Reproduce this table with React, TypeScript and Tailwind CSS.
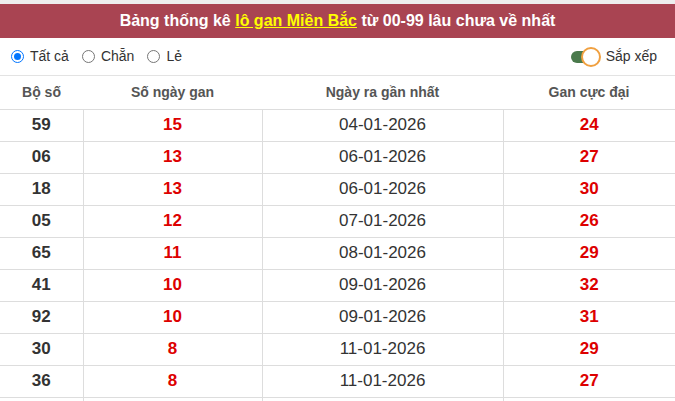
import React from "react";

const rows = [
  ["59", "15", "04-01-2026", "24"],
  ["06", "13", "06-01-2026", "27"],
  ["18", "13", "06-01-2026", "30"],
  ["05", "12", "07-01-2026", "26"],
  ["65", "11", "08-01-2026", "29"],
  ["41", "10", "09-01-2026", "32"],
  ["92", "10", "09-01-2026", "31"],
  ["30", "8", "11-01-2026", "29"],
  ["36", "8", "11-01-2026", "27"],
  ["", "", "", ""],
];

function Radio({ checked, label }: { checked?: boolean; label: string }) {
  return (
    <label className="flex items-center gap-[6px]">
      <span
        className={
          "flex h-[13px] w-[13px] items-center justify-center rounded-full border " +
          (checked ? "border-[#0075ff]" : "border-[#767676]")
        }
      >
        {checked && <span className="h-[7px] w-[7px] rounded-full bg-[#0075ff]" />}
      </span>
      <span>{label}</span>
    </label>
  );
}

export default function App() {
  return (
    <div className="w-[675px] h-[401px] overflow-hidden pt-[4px] font-['Liberation_Sans',Arial,sans-serif] bg-[#eeeeee]">
      <div className="bg-white">
        <div className="flex h-[34px] items-center justify-center bg-[#a94452] text-[16px] font-bold text-white">
          <span>
            Bảng thống kê{" "}
            <a className="text-[#ffff00] underline">lô gan Miền Bắc</a> từ 00-99 lâu chưa về nhất
          </span>
        </div>
        <div className="flex h-[38px] items-center justify-between border-b border-[#e3e3e3] pl-[11px] pr-[18px] text-[14px] text-[#333]">
          <div className="flex items-center gap-[13px]">
            <Radio checked label="Tất cả" />
            <Radio label="Chẵn" />
            <Radio label="Lẻ" />
          </div>
          <div className="flex items-center gap-[5px]">
            <div className="relative h-[20px] w-[30px]">
              <div className="absolute left-0 top-[4px] h-[12px] w-[24px] rounded-full bg-[#4a7a4c]" />
              <div className="absolute right-0 top-0 h-[20px] w-[20px] rounded-full border-2 border-[#f0a040] bg-white" />
            </div>
            <span>Sắp xếp</span>
          </div>
        </div>
        <table className="w-full border-collapse">
          <colgroup>
            <col className="w-[83px]" />
            <col className="w-[179px]" />
            <col className="w-[241px]" />
            <col />
          </colgroup>
          <thead>
            <tr className="h-[33px] border-b border-[#dddddd] text-[14px] font-bold text-[#555]">
              <th className="font-bold">Bộ số</th>
              <th className="font-bold">Số ngày gan</th>
              <th className="font-bold">Ngày ra gần nhất</th>
              <th className="font-bold">Gan cực đại</th>
            </tr>
          </thead>
          <tbody>
            {rows.map((r, i) => (
              <tr key={i} className="h-[32px] border-b border-[#dddddd]">
                <td className="text-center text-[17px] font-bold text-[#333]">{r[0]}</td>
                <td className="border-l border-[#dddddd] text-center text-[17px] font-bold text-[#dd0000]">{r[1]}</td>
                <td className="border-l border-[#dddddd] text-center text-[17px] text-[#333]">{r[2]}</td>
                <td className="border-l border-[#dddddd] text-center text-[17px] font-bold text-[#dd0000]">{r[3]}</td>
              </tr>
            ))}
          </tbody>
        </table>
      </div>
    </div>
  );
}
